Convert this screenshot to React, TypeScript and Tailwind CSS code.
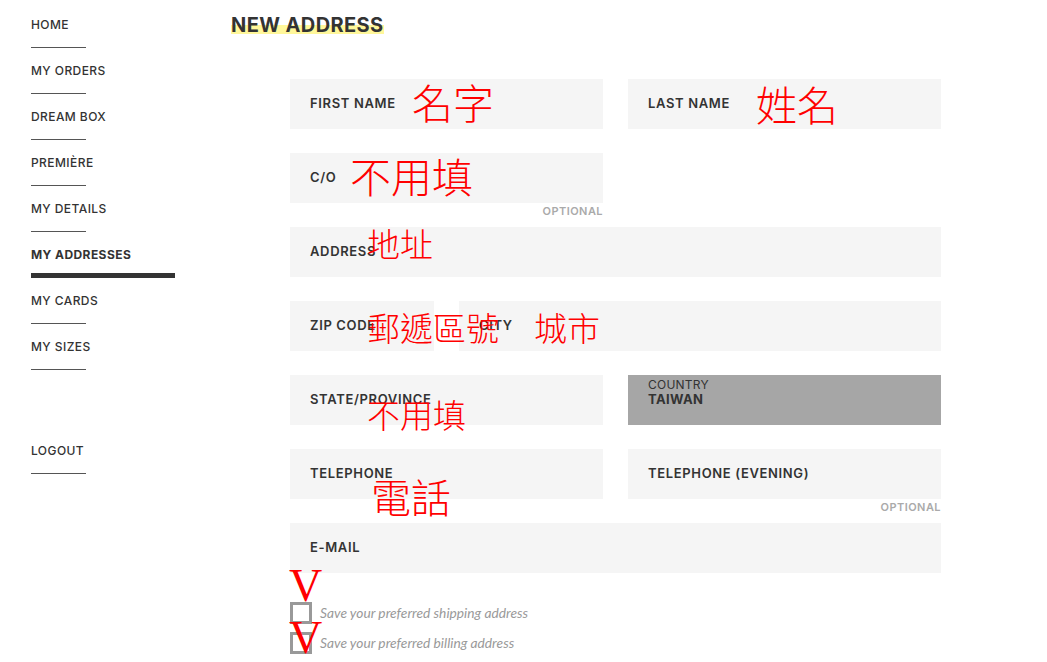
import React from 'react'

const navItems = [
  { label: 'HOME' },
  { label: 'MY ORDERS' },
  { label: 'DREAM BOX' },
  { label: 'PREMIÈRE' },
  { label: 'MY DETAILS' },
  { label: 'MY ADDRESSES', active: true },
  { label: 'MY CARDS' },
  { label: 'MY SIZES' },
]

const sans = "font-['Inter','Open_Sans',sans-serif]"

const Field = ({ label, className = '', optional = false }: { label: string; className?: string; optional?: boolean }) => (
  <div className={`relative flex h-[50px] items-center bg-[#f5f5f5] px-[20px] pb-[3px] ${className}`}>
    <span className="text-[13px] leading-[16px] font-semibold tracking-[0.05em] text-[#333]">{label}</span>
    {optional && (
      <span className="absolute top-full right-0 mt-[1px] text-[11px] leading-[14px] font-semibold tracking-[0.04em] text-[#aaa]">
        OPTIONAL
      </span>
    )}
  </div>
)

const Note = ({ text, className }: { text: string; className: string }) => (
  <span
    className={`pointer-events-none absolute leading-none font-light whitespace-nowrap text-[#ff0000] font-['Noto_Sans_CJK_TC',serif] ${className}`}
  >
    {text}
  </span>
)

const Check = ({ label }: { label: string }) => (
  <label className="flex h-[22px] items-center gap-[8px]">
    <span className="box-border h-[22px] w-[22px] border-[3px] border-[#999] bg-white" />
    <span className="font-['Lato','Open_Sans',sans-serif] text-[13.75px] text-[#999] italic">{label}</span>
  </label>
)

export default function App() {
  return (
    <div className={`relative flex min-h-[662px] w-[1047px] bg-white ${sans}`}>
      <aside className="w-[231px] shrink-0 pt-[17px] pl-[31px]">
        {navItems.map(item => (
          <div key={item.label} className="h-[46px]">
            <div
              className={`text-[12px] leading-[16px] tracking-[0.035em] text-[#333] ${item.active ? 'font-bold' : 'font-medium'}`}
            >
              {item.label}
            </div>
            {item.active ? (
              <div className="mt-[10px] h-[5px] w-[144px] bg-[#333]" />
            ) : (
              <div className="mt-[14px] h-px w-[55px] bg-[#555]" />
            )}
          </div>
        ))}
        <div className="mt-[58px] h-[46px]">
          <div className="text-[12px] leading-[16px] font-medium tracking-[0.035em] text-[#333]">LOGOUT</div>
          <div className="mt-[14px] h-px w-[55px] bg-[#555]" />
        </div>
      </aside>

      <main className="flex-1 pt-[14px]">
        <h1 className="w-fit bg-[linear-gradient(transparent_50%,#fff79a_50%,#fff79a_90%,transparent_90%)] text-[20px] leading-[22px] font-bold tracking-[0.02em] text-[#333]">
          NEW ADDRESS
        </h1>

        <div className="mt-[43px] ml-[59px] flex w-[651px] flex-col gap-[24px]">
          <div className="grid grid-cols-2 gap-[25px]">
            <Field label="FIRST NAME" />
            <Field label="LAST NAME" />
          </div>
          <div className="grid grid-cols-2 gap-[25px]">
            <Field label="C/O" optional />
          </div>
          <Field label="ADDRESS" />
          <div className="flex gap-[25px]">
            <Field label="ZIP CODE" className="w-[144px] shrink-0" />
            <Field label="CITY" className="flex-1" />
          </div>
          <div className="grid grid-cols-2 gap-[25px]">
            <Field label="STATE/PROVINCE" />
            <div className="h-[50px] bg-[#a6a6a6] px-[20px] pt-[3px] text-[#333]">
              <div className="text-[12px] leading-[14px] tracking-[0.02em]">COUNTRY</div>
              <div className="text-[13px] leading-[14px] font-bold tracking-[0.03em]">TAIWAN</div>
            </div>
          </div>
          <div className="grid grid-cols-2 gap-[25px]">
            <Field label="TELEPHONE" />
            <Field label="TELEPHONE (EVENING)" optional />
          </div>
          <Field label="E-MAIL" />

          <div className="mt-[5px] flex flex-col gap-[8px]">
            <Check label="Save your preferred shipping address" />
            <Check label="Save your preferred billing address" />
          </div>
        </div>
      </main>

      {/* hand-written red notes on top of the form */}
      <Note text="名字" className="top-[81px] left-[412px] text-[41px]" />
      <Note text="姓名" className="top-[83px] left-[756px] text-[41px]" />
      <Note text="不用填" className="top-[155px] left-[350px] text-[41px]" />
      <Note text="地址" className="top-[227px] left-[367px] text-[33px]" />
      <Note text="郵遞區號" className="top-[311px] left-[367px] text-[33px]" />
      <Note text="城市" className="top-[311px] left-[534px] text-[33px]" />
      <Note text="不用填" className="top-[398px] left-[367px] text-[33px]" />
      <Note text="電話" className="top-[476px] left-[371px] text-[40px]" />
      <span className="pointer-events-none absolute top-[568px] left-[289px] font-['Liberation_Serif',serif] text-[46px] leading-[36px] text-[#ff0000]">
        V
      </span>
      <span className="pointer-events-none absolute top-[620px] left-[289px] font-['Liberation_Serif',serif] text-[46px] leading-[36px] text-[#ff0000]">
        V
      </span>
    </div>
  )
}
